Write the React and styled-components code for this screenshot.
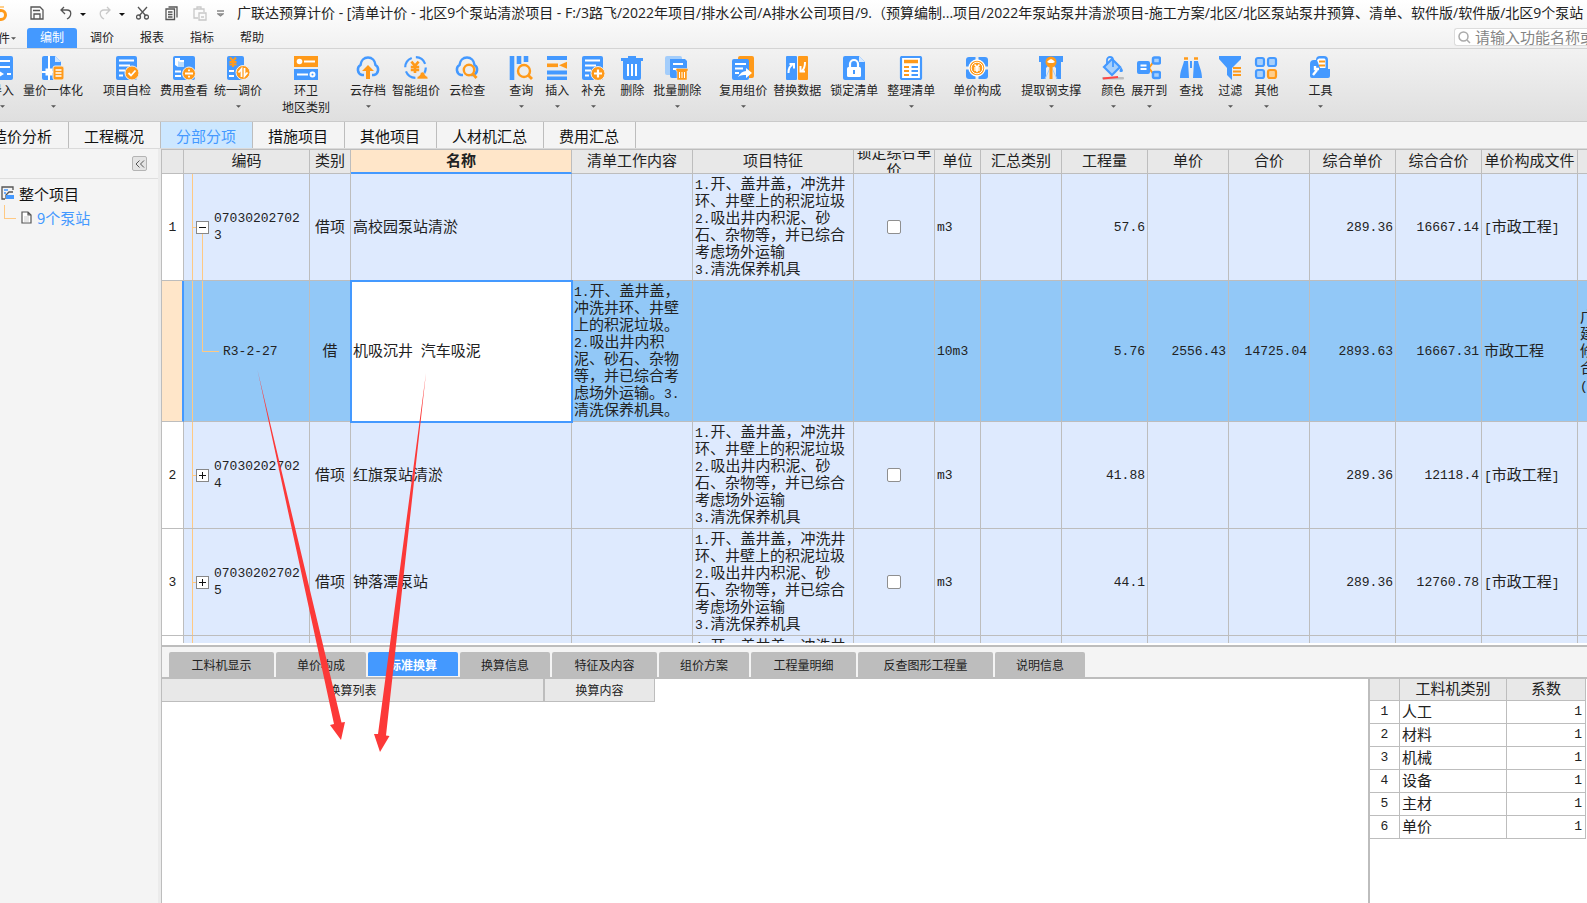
import React from 'react'
import styled, { createGlobalStyle, css } from 'styled-components'

const blue = '#4499ff'
const orange = '#ff9a1a'
const line = '#bdbdbd'
const uiFont = '"Open Sans", "Noto Sans CJK SC", sans-serif'
const gridFont = '"Noto Sans CJK SC", sans-serif'
const numFont = '"Liberation Mono", "Noto Sans CJK SC", monospace'

const GlobalStyle = createGlobalStyle`
  * { box-sizing: border-box; }
  body { margin: 0; font-family: ${uiFont}; font-size: 12px; color: #222; overflow: hidden; }
  button { font: inherit; color: inherit; border: 0; background: none; padding: 0; white-space: nowrap; }
  svg { flex: none; }
`

const Window = styled.div`
  position: relative;
  height: 100vh;
  display: flex;
  flex-direction: column;
  overflow: hidden;
  background: #f4f4f4;
`

const TopBar = styled.header`
  flex: none;
  background: linear-gradient(#ffffff, #f1f1f1);
  border-bottom: 1px solid #d4d4d4;
`

const TitleRow = styled.div`
  display: flex;
  align-items: center;
  height: 28px;
`

const QuickBar = styled.div`
  flex: none;
  width: 237px;
  display: flex;
  align-items: center;
`

const QuickButton = styled.button`
  flex: none;
  display: flex;
  width: ${props => props.$width}px;
  opacity: ${props => (props.disabled ? 0.3 : 1)};
`

const Title = styled.h1`
  margin: 0;
  padding-bottom: 2px;
  font-size: 14px;
  font-weight: 400;
  line-height: 26px;
  white-space: nowrap;
`

const MenuRow = styled.nav`
  display: flex;
  height: 20px;
`

const MenuButton = styled.button`
  width: 50px;
  line-height: 20px;
  ${props => props.$active && css`
    background: ${blue};
    color: #fff;
    border-radius: 3px 3px 0 0;
  `}
`

const FileButton = styled.button`
  width: 27px;
  display: flex;
  align-items: center;
  justify-content: flex-end;
  gap: 1px;
  padding-right: 11px;
  overflow: hidden;
`

const SearchBox = styled.label`
  margin-left: auto;
  width: 133px;
  height: 18px;
  display: flex;
  align-items: center;
  gap: 4px;
  padding-left: 3px;
  background: #fff;
  border: 1px solid #dcdcdc;
  border-right: 0;
  border-radius: 3px 0 0 3px;
`

const SearchInput = styled.input`
  flex: 1;
  min-width: 0;
  height: 16px;
  padding: 0 0 2px;
  border: 0;
  outline: 0;
  background: none;
  font-family: ${gridFont};
  font-size: 15px;
  &::placeholder { color: #858585; opacity: 1; }
`

const Ribbon = styled.div`
  flex: none;
  display: flex;
  align-items: flex-start;
  height: 73px;
  padding-top: 7px;
  margin-left: -10px;
  background: linear-gradient(#f2f2f2, #dfdfdf);
  border-bottom: 1px solid #cacaca;
`

const ToolButton = styled.button`
  flex: none;
  display: flex;
  flex-direction: column;
  align-items: center;
  margin-left: ${props => props.$space}px;
  line-height: 17px;
  font-family: ${gridFont};
`

const ToolLabel = styled.span`
  margin-top: 1px;
`

const CaretSlot = styled.span`
  display: flex;
  align-items: center;
  height: 17px;
  padding-bottom: 1px;
`

const Tabs = styled.nav`
  flex: none;
  display: flex;
  height: 27px;
  margin-left: -23px;
  border-bottom: 1px solid #dadada;
`

const Tab = styled.button`
  padding: 2px 16px 0 15px;
  border-right: 1px solid ${line};
  font-family: ${gridFont};
  font-size: 15px;
  line-height: 24px;
  color: ${props => (props.$active ? blue : '#111')};
  background: ${props => (props.$active ? '#cce7ff' : 'transparent')};
`

const Body = styled.div`
  flex: 1;
  min-height: 0;
  display: flex;
`

const Sidebar = styled.aside`
  flex: 0 0 161px;
  border-right: 3px solid #ebebeb;
`

const SideHead = styled.div`
  display: flex;
  justify-content: flex-end;
  height: 30px;
  padding: 7px 11px 0 0;
  border-bottom: 1px solid #dedede;
`

const CollapseButton = styled.button`
  width: 15px;
  height: 15px;
  display: flex;
  align-items: center;
  justify-content: center;
  border: 1px solid #b4b4b4;
  border-radius: 2px;
  background: #e4e4e4;
`

const Tree = styled.ul`
  margin: 0;
  padding: 2px 0 0;
  list-style: none;
  font-family: ${gridFont};
  font-size: 15px;
`

const TreeItem = styled.li`
  display: flex;
  align-items: center;
  gap: 5px;
  height: 24px;
  padding-left: ${props => (props.$child ? 4 : 1)}px;
  color: ${props => (props.$child ? blue : '#111')};
`

const Branch = styled.span`
  width: 12px;
  height: 14px;
  align-self: flex-start;
  border-left: 1px solid #ffc983;
  border-bottom: 1px solid #ffc983;
`

const Main = styled.main`
  flex: 1;
  min-width: 0;
  display: flex;
  flex-direction: column;
  border-left: 1px solid ${line};
`

const GridPane = styled.section`
  flex: 1;
  min-height: 0;
  overflow: hidden;
  border-top: 1px solid ${line};
`

const Grid = styled.table`
  width: 100%;
  min-width: 1512px;
  table-layout: fixed;
  border-spacing: 0;
  font-family: ${gridFont};
  font-size: 15px;
  line-height: 17px;
`

const GridHead = styled.th`
  height: 24px;
  padding: 0;
  font-weight: ${props => (props.$current ? 700 : 400)};
  background: ${props => (props.$current ? '#ffe6c9' : '#e8e8e8')};
  border-right: 1px solid ${line};
  border-bottom: ${props => (props.$current ? `2px solid ${blue}` : `1px solid ${line}`)};
`

const HeadText = styled.div`
  height: 22px;
  padding-bottom: 4px;
  display: flex;
  align-items: center;
  justify-content: center;
  overflow: hidden;
`

const GridRow = styled.tr`
  background: ${props => (props.$selected ? '#92c8f7' : '#deeafe')};
`

const Cell = styled.td`
  height: 107px;
  padding: ${props => (props.$num ? '2px' : '0 2px 4px')};
  text-align: ${props => props.$align || 'left'};
  font-family: ${props => (props.$num ? numFont : 'inherit')};
  font-size: ${props => (props.$num ? 13 : 15)}px;
  border-right: 1px solid ${line};
  border-bottom: 1px solid ${line};
  ${props => props.$editing && css`
    background: #fff;
    outline: 2px solid ${blue};
    outline-offset: -1px;
  `}
`

const RowNumber = styled(Cell)`
  padding: 0;
  text-align: center;
  font-family: ${numFont};
  font-size: 13px;
  background: ${props => (props.$selected ? '#ffe6c9' : '#fff')};
  ${props => props.$selected && css`border-right: 2px solid ${blue};`}
`

// the tree lines are painted behind the code text
const guide = 'linear-gradient(#ffc983, #ffc983)'

const CodeCell = styled(Cell)`
  padding-left: ${props => (props.$child ? 39 : 12)}px;
  font-family: ${numFont};
  font-size: 13px;
  background-repeat: no-repeat;
  background-image: ${guide}, ${guide}, ${guide};
  background-position: 8px 0, ${props => (props.$child ? '18px 0, 18px 50%' : '8px 50%, 18px 100%')};
  background-size: 1px 100%, ${props => (props.$child ? '1px 50%, 17px 1px' : `4px 1px, 1px ${props.$open ? '50%' : '0'}`)};
`

const CodeBox = styled.div`
  display: flex;
  align-items: center;
  gap: 5px;
  word-break: break-all;
`

const Expander = styled.button`
  flex: none;
  display: flex;
  background: #fff;
`

// zero line height keeps the second face from growing the line box
const Half = styled.span`
  font-family: ${numFont};
  font-size: 13px;
  line-height: 0;
  white-space: pre-wrap;
`

const Check = styled.input`
  display: block;
  margin: 0 auto;
  width: 14px;
  height: 14px;
  appearance: none;
  background: #fff;
  border: 1px solid #8f8f8f;
  border-radius: 2px;
`

const BottomPane = styled.section`
  flex: 0 0 260px;
  display: flex;
  flex-direction: column;
  border-top: 2px solid #fff;
`

const BottomTabs = styled.div`
  display: flex;
  align-items: flex-start;
  gap: 2px;
  height: 34px;
  padding: 5px 7px 0;
  border-top: 2px solid ${line};
  border-bottom: 2px solid ${line};
`

const BottomTab = styled.button`
  flex: none;
  width: ${props => props.$chars * 15 + 30}px;
  height: ${props => (props.$active ? 24 : 25)}px;
  font-family: ${gridFont};
  font-weight: ${props => (props.$active ? 700 : 400)};
  line-height: 25px;
  border-radius: 2px 2px 0 0;
  color: ${props => (props.$active ? '#fff' : '#222')};
  background: ${props => (props.$active ? blue : line)};
`

const BottomBody = styled.div`
  flex: 1;
  min-height: 0;
  display: flex;
  background: #fff;
`

const ConvertArea = styled.div`
  flex: 1;
  min-width: 0;
`

const ConvertTable = styled.table`
  width: 493px;
  table-layout: fixed;
  border-spacing: 0;
  font-family: ${gridFont};
`

const ConvertHead = styled.th`
  height: 23px;
  padding: 0 0 2px;
  font-weight: 400;
  background: #e8e8e8;
  border-right: ${props => (props.$last ? 1 : 2)}px solid ${line};
  border-bottom: 1px solid ${line};
`

const FactorArea = styled.div`
  flex: 0 0 219px;
  border-left: 2px solid ${line};
`

const FactorTable = styled.table`
  width: 216px;
  table-layout: fixed;
  border-spacing: 0;
  font-family: ${gridFont};
  font-size: 15px;
  line-height: 18px;
`

const FactorHead = styled.th`
  height: 22px;
  padding: 0 0 3px;
  font-weight: 400;
  background: #e8e8e8;
  border-right: 1px solid ${line};
  border-bottom: 1px solid ${line};
`

const FactorCell = styled.td`
  height: 23px;
  padding: ${props => (props.$num ? '0 3px' : '0 2px 2px')};
  text-align: ${props => props.$align || 'left'};
  font-family: ${props => (props.$num ? numFont : 'inherit')};
  font-size: ${props => (props.$num ? 13 : 15)}px;
  border-right: 1px solid ${line};
  border-bottom: 1px solid ${line};
`

const Arrows = styled.svg`
  position: absolute;
  left: 250px;
  top: 365px;
  pointer-events: none;
`

const Caret = ({ color = '#555', size = 5 }) => (
    <svg width={size} height="3" viewBox="0 0 6 3"><path d="M0 0h6L3 3z" fill={color} /></svg>
)

const Coin = ({ cx, cy, r = 7, children }) => (
    <g>
        <circle cx={cx} cy={cy} r={r} fill={orange} stroke="#f0f0f0" strokeWidth="1" />
        <g fill="none" stroke="#fff" strokeWidth="1.8">{children}</g>
    </g>
)

const Sheet = () => (
    <g>
        <rect x="1" width="21" height="24" rx="2" fill={blue} />
        <path d="M4 4.500h15M4 9.500h11M4 14.500h6M4 19.500h4" stroke="#fff" strokeWidth="2" />
    </g>
)

const yen = 'M-3 -4.500L0 -1L3 -4.500M0 -1V5M-3.500 0H3.500M-3.500 2.500H3.500'
const cloud = 'M8 19H6A5.500 5.500 0 0 1 4.500 9C5 4.500 8 1.500 12 1.500S19 4.500 19.500 9A5.500 5.500 0 0 1 18 19H16'

const icons = {
    import: <g>
        <rect x="1" width="22" height="24" rx="2" fill={blue} />
        <path d="M4 5h16M4 11h16M17 18h4" stroke="#fff" strokeWidth="2" /><path d="M6 13l8 5-8 5z" fill="#fff" />
    </g>,
    quantity: <g>
        <path d="M3 0h11l6 6v18H3a2 2 0 0 1-2-2V2a2 2 0 0 1 2-2z" fill={blue} />
        <path d="M14 0v6h6z" fill="#cfe5ff" />
        <path d="M8 0v24M1 16h12" stroke="#fff" strokeWidth="2" />
        <rect x="4.500" y="12.500" width="7" height="7" fill="#fff" />
        <rect x="12" y="10" width="11" height="14" rx="2" fill={orange} stroke="#eee" />
        <path d="M14.500 14h6M14.500 17h6M14.500 20h6" stroke="#fff" strokeWidth="1.700" />
    </g>,
    check: <g><Sheet /><Coin cx="17" cy="17"><path d="M13.500 17l2.500 2.500 4.500-5" /></Coin></g>,
    fee: <g>
        <rect x="1" width="22" height="24" rx="2" fill={blue} />
        <path d="M3 2h5v2h4v7H6L3 9z" fill="#fff" /><path d="M6 5l2 1h4v5H6z" fill="#b9dcff" />
        <path d="M3 15.500h6M3 20h6" stroke="#fff" strokeWidth="2" />
        <Coin cx="17" cy="17.500" r="6.500"><path d="M13 17.500h8M17 13.500v1.800M17 19.700v1.800" /></Coin>
    </g>,
    adjust: <g>
        <rect x="1" width="17" height="24" rx="2" fill={blue} />
        <path d={yen} transform="translate(7 6)" fill="none" stroke={orange} strokeWidth="2" />
        <path d="M3 15h5M3 20h5" stroke="#fff" strokeWidth="2" />
        <Coin cx="17" cy="16.500"><path d="M15.500 21v-8l-3 3.500M18.500 12v8l3-3.500" /></Coin>
    </g>,
    region: <g>
        <rect width="24" height="11" fill={orange} /><rect y="13" width="24" height="11" fill={blue} />
        <circle cx="5.500" cy="5.500" r="2.800" fill="#fff" /><path d="M10 5.500h11M3 18.500h11" stroke="#fff" strokeWidth="2" />
        <circle cx="18.500" cy="18.500" r="2" fill="none" stroke="#fff" strokeWidth="2" />
    </g>,
    archive: <g><path d={cloud} fill="none" stroke={blue} strokeWidth="2.500" /><path d="M12 9l6 6h-4v8h-4v-8H6z" fill={orange} /></g>,
    smart: <g>
        <circle cx="11.500" cy="11.500" r="10.300" fill="none" stroke={blue} strokeWidth="2.200" strokeDasharray="12 4.200" />
        <path d={yen} transform="translate(11 11) scale(1.200)" fill="none" stroke={orange} strokeWidth="2.200" />
        <path d="M13 23h11c0-3-2-3-3-4 0-4-5-4-5 0-1 1-3 1-3 4z" fill={orange} stroke="#eee" strokeWidth=".6" />
    </g>,
    cloudCheck: <g><path d={cloud} fill="none" stroke={blue} strokeWidth="2.500" /><circle cx="14" cy="14" r="5.200" fill="#ededed" stroke={orange} strokeWidth="2.400" /><path d="M17.500 17.500l4 4.500" stroke={orange} strokeWidth="2.800" /></g>,
    query: <g>
        <path d="M3 0v24M10 0v8M17 0v6" stroke={blue} strokeWidth="4.600" />
        <circle cx="15" cy="15" r="6" fill="#ededed" stroke={orange} strokeWidth="2.400" /><path d="M19 19l4 4" stroke={orange} strokeWidth="2.800" />
    </g>,
    insert: <g><path d="M2 2h20M2 16.500h20M2 22.500h20" stroke={blue} strokeWidth="4" strokeLinecap="butt" /><path d="M2 9.300h11" stroke={orange} strokeWidth="3.600" /><path d="M14 9.300l8-3.500v7z" fill={orange} /></g>,
    add: <g><Sheet /><Coin cx="17" cy="17.500"><path d="M13 17.500h8M17 13.500v8" strokeWidth="2.200" /></Coin></g>,
    remove: <g><path d="M8 0h8v2h7v3H1V2h7z" fill={blue} /><path d="M3 5h18v17a2 2 0 0 1-2 2H5a2 2 0 0 1-2-2z" fill={blue} /><path d="M8 8v12M12 8v12M16 8v12" stroke="#fff" strokeWidth="2" /></g>,
    batch: <g>
        <rect width="17" height="19" rx="2" fill="#a3cdfb" /><path d="M5 3h15l2 2v17H7a2 2 0 0 1-2-2z" fill={blue} />
        <path d="M8 8h10M8 13h4" stroke="#fff" strokeWidth="1.800" />
        <path d="M11 12.500h12v2.500h-1V24H12v-9H11z" fill={orange} stroke="#eee" strokeWidth=".5" /><path d="M14.500 16v6M17 16v6M19.500 16v6" stroke="#fff" />
    </g>,
    reuse: <g><rect x="7" width="16" height="22" rx="2" fill={orange} /><rect x="1" y="3" width="17" height="21" rx="2" fill={blue} /><path d="M4 8h11M4 12.500h8M4 17h4" stroke="#fff" strokeWidth="2" /><path d="M7 21c2-4 5-6 8-6v-3l6 5-6 5v-3c-3 0-5 0-8 2z" fill="#fff" /></g>,
    replace: <g><rect x="1" width="11" height="24" rx="1" fill={blue} /><rect x="13" width="10" height="24" rx="1" fill={orange} /><path d="M3.500 17c0-4 1-7 4-8M4.500 8H9v4.500M20 6c0 4-1 7-3 9M15.500 10v5.500H20" fill="none" stroke="#fff" strokeWidth="2" /></g>,
    lock: <g><path d="M3 0h14l6 6v18H3a2 2 0 0 1-2-2V2a2 2 0 0 1 2-2z" fill={blue} /><path d="M17 0v6h6z" fill="#d6e9ff" /><rect x="5" y="11" width="14" height="10" rx="1.500" fill="#fff" /><path d="M8 12V8a4 4 0 0 1 8 0v4" fill="none" stroke="#fff" strokeWidth="2.200" /><path d="M12 14v4" stroke={blue} strokeWidth="2" /></g>,
    arrange: <g><rect x="2" y="1" width="20" height="22" rx="1" fill="#fff" stroke={blue} strokeWidth="2.200" /><path d="M5 5.500h14" stroke={orange} strokeWidth="3.500" /><path d="M5 11h5M5 15h5M5 19h5" stroke={orange} strokeWidth="1.800" /><path d="M12.500 11H19M12.500 15H19M12.500 19H19" stroke={blue} strokeWidth="1.800" /></g>,
    price: <g>
        <rect x="1" y="1" width="22" height="22" rx="3" fill={blue} /><path d="M12 0v24M0 12h24" stroke="#eee" strokeWidth="3" />
        <circle cx="12" cy="12" r="8" fill={orange} stroke="#fff" strokeWidth="1.300" /><circle cx="12" cy="12" r="5.800" fill="none" stroke="#fff" />
        <path d={yen} transform="translate(12 12) scale(.8)" fill="none" stroke="#fff" strokeWidth="2" />
    </g>,
    steel: <g>
        <path d="M0 0h24v6h-2v17h-5V12l-5-5-5 5v11H2V6H0z" fill={blue} /><path d="M6 23l6-13 6 13" fill="none" stroke="#a8d0fb" />
        <path d="M12 10v13" stroke={orange} strokeWidth="3" /><circle cx="12" cy="6" r="5.500" fill={orange} /><path d="M8 6l2-2 2-1 2 1 2 2-2 1h-4z" fill="#fff" />
    </g>,
    color: <g>
        <path d="M11 3l8 8-8 8-8-8z" fill="#a8d0fb" stroke={blue} strokeWidth="2.200" /><path d="M6 9V4a3 3 0 0 1 6 0v7" fill="none" stroke={blue} strokeWidth="1.800" />
        <path d="M20 11c3 4 2 5 0 5s-2-1 0-5z" fill={blue} /><rect x="1" y="21" width="22" height="2.500" rx="1" fill="#bdbdbd" /><path d="M2 22.500l15-1.500" stroke="#ff4646" strokeWidth="1.800" />
    </g>,
    expand: <g>
        <path d="M12 12l5-7M12 12l5 7" stroke={orange} strokeWidth="2" /><rect y="5" width="13" height="13" rx="2" fill={blue} /><path d="M3.500 9.500h6M3.500 13h6" stroke="#fff" strokeWidth="1.800" />
        <rect x="16" y="1.500" width="7" height="6" rx="1.500" fill="#a8d0fb" stroke={blue} strokeWidth="2.500" /><rect x="16" y="16" width="7" height="6" rx="1.500" fill="#a8d0fb" stroke={blue} strokeWidth="2.500" />
    </g>,
    find: <g><path d="M5 5h4l1 17H1C1 15 4 10 5 5zM15 5h4c1 5 4 10 4 17h-9z" fill={blue} /><path d="M11 5h2v7h-2z" fill={blue} /><path d="M5 2.500h4M15 2.500h4" stroke={orange} strokeWidth="2.500" /></g>,
    filter: <g><path d="M1 0h22v3l-9 9v12l-5-5v-7L1 3z" fill={blue} /><path d="M15 12h8M15 15.500h8M15 19h8" stroke={orange} strokeWidth="1.800" /></g>,
    other: <g fill="#a8d0fb" stroke={blue} strokeWidth="2.200">
        <rect x="2" y="2" width="8" height="8" rx="2" /><rect x="14" y="2" width="8" height="8" rx="2" /><rect x="2" y="14" width="8" height="8" rx="2" />
        <rect x="14" y="14" width="8" height="8" rx="2" fill="#ffce8c" stroke={orange} />
    </g>,
    tools: <g>
        <path d="M2 8a4 4 0 0 1 4-4h2a4 4 0 0 1 4-4h4a4 4 0 0 1 4 4v9h2v7a2 2 0 0 1-2 2H4a2 2 0 0 1-2-2z" fill={blue} /><path d="M9 4l2-1.500h5.500l1 1V12H12z" fill="#fff" /><path d="M11 5.500h6M11 9.500h6" stroke={orange} strokeWidth="1.800" />
        <path d="M5 19l4-5M7 10v3h4" fill="none" stroke="#fff" strokeWidth="2.400" />
    </g>,
}

const tools = [
    { icon: 'import', label: '导入', space: 0, menu: true },
    { icon: 'quantity', label: '量价一体化', space: 9, menu: true },
    { icon: 'check', label: '项目自检', space: 20 },
    { icon: 'fee', label: '费用查看', space: 9 },
    { icon: 'adjust', label: '统一调价', space: 6, menu: true },
    { icon: 'region', label: '环卫', second: '地区类别', space: 20 },
    { icon: 'archive', label: '云存档', space: 20, menu: true },
    { icon: 'smart', label: '智能组价', space: 6 },
    { icon: 'cloudCheck', label: '云检查', space: 9 },
    { icon: 'query', label: '查询', space: 24, menu: true },
    { icon: 'insert', label: '插入', space: 12, menu: true },
    { icon: 'add', label: '补充', space: 12, menu: true },
    { icon: 'remove', label: '删除', space: 15 },
    { icon: 'batch', label: '批量删除', space: 9, menu: true },
    { icon: 'reuse', label: '复用组价', space: 18, menu: true },
    { icon: 'replace', label: '替换数据', space: 6 },
    { icon: 'lock', label: '锁定清单', space: 9 },
    { icon: 'arrange', label: '整理清单', space: 9, menu: true },
    { icon: 'price', label: '单价构成', space: 18 },
    { icon: 'steel', label: '提取钢支撑', space: 20, menu: true },
    { icon: 'color', label: '颜色', space: 20, menu: true },
    { icon: 'expand', label: '展开到', space: 6, menu: true },
    { icon: 'find', label: '查找', space: 12 },
    { icon: 'filter', label: '过滤', space: 15, menu: true },
    { icon: 'other', label: '其他', space: 12, menu: true },
    { icon: 'tools', label: '工具', space: 30, menu: true },
]

const tabs = ['造价分析', '工程概况', '分部分项', '措施项目', '其他项目', '人材机汇总', '费用汇总']

const columns = [
    ['', 22], ['编码', 126], ['类别', 41], ['名称', 221], ['清单工作内容', 121], ['项目特征', 161],
    ['锁定综合单价', 81], ['单位', 46], ['汇总类别', 81], ['工程量', 86], ['单价', 81], ['合价', 81],
    ['综合单价', 86], ['综合合价', 86], ['单价构成文件', 96], ['', null],
]

const feature = '1.开、盖井盖，冲洗井环、井壁上的积泥垃圾\n2.吸出井内积泥、砂石、杂物等，并已综合考虑场外运输\n3.清洗保养机具'

const rows = [
    { no: 1, code: '070302027023', open: true, kind: '借项', name: '高校园泵站清淤', feature, unit: 'm3', qty: '57.6', unitAll: '289.36', totalAll: '16667.14', file: '[市政工程]' },
    {
        child: true, code: 'R3-2-27', kind: '借', name: '机吸沉井 汽车吸泥',
        work: '1.开、盖井盖，冲洗井环、井壁上的积泥垃圾。2.吸出井内积泥、砂石、杂物等，并已综合考虑场外运输。3.清洗保养机具。',
        unit: '10m3', qty: '5.76', price: '2556.43', total: '14725.04', unitAll: '2893.63', totalAll: '16667.31', file: '市政工程', extra: '广\n建\n修\n合\n(',
    },
    { no: 2, code: '070302027024', kind: '借项', name: '红旗泵站清淤', feature, unit: 'm3', qty: '41.88', unitAll: '289.36', totalAll: '12118.4', file: '[市政工程]' },
    { no: 3, code: '070302027025', kind: '借项', name: '钟落潭泵站', feature, unit: 'm3', qty: '44.1', unitAll: '289.36', totalAll: '12760.78', file: '[市政工程]' },
    { code: '', kind: '', name: '', feature },
]

const bottomTabs = ['工料机显示', '单价构成', '标准换算', '换算信息', '特征及内容', '组价方案', '工程量明细', '反查图形工程量', '说明信息']
const factors = ['人工', '材料', '机械', '设备', '主材', '单价']

// half-width characters are set in the monospace face
function Mixed({ text = '' }) {
    return text.split('\n').map((part, i) => (
        <React.Fragment key={i}>
            {i > 0 && <br />}
            {part.split(/([\x20-\x7e]+)/).map((s, j) => (j % 2 ? <Half key={j}>{s}</Half> : s))}
        </React.Fragment>
    ))
}

function QuickIcons() {
    const pen = { fill: 'none', stroke: '#555', strokeWidth: 1.3 }
    return (
        <QuickBar>
            <QuickButton $width={30} aria-label="首页">
                <svg width="8" height="16"><circle cx="1" cy="9" r="4.500" fill="none" stroke={orange} strokeWidth="3" /><path d="M0 1h4" stroke="#ffcf8a" strokeWidth="2" /></svg>
            </QuickButton>
            <QuickButton $width={30} aria-label="保存">
                <svg width="14" height="16" {...pen}><path d="M1 1h9l3 3v9H1zM3 4.500h7M4 13V8h6v5" /></svg>
            </QuickButton>
            <QuickButton $width={20} aria-label="撤销">
                <svg width="12" height="16" {...pen}><path d="M4 1L1 4l4 4M1 4h6c5 0 5 6 0 9" /></svg>
            </QuickButton>
            <QuickButton $width={19} aria-label="撤销列表"><Caret color="#111" size={6} /></QuickButton>
            <QuickButton $width={20} disabled aria-label="恢复">
                <svg width="12" height="16" {...pen}><path d="M8 1l3 3-4 4M11 4H5C0 4 0 10 5 13" /></svg>
            </QuickButton>
            <QuickButton $width={17} aria-label="恢复列表"><Caret color="#111" size={6} /></QuickButton>
            <QuickButton $width={29} aria-label="剪切">
                <svg width="13" height="16" {...pen}><path d="M2 1l8 9M11 1l-8 9" /><circle cx="2.500" cy="11" r="2" /><circle cx="10.500" cy="11" r="2" /></svg>
            </QuickButton>
            <QuickButton $width={28} aria-label="复制">
                <svg width="13" height="16" {...pen}><path d="M3.500 1H12v10.500M1 3h8.500v10.500H1zM3 6h4.500M3 8.500h4.500M3 11h4.500" /></svg>
            </QuickButton>
            <QuickButton $width={24} disabled aria-label="粘贴">
                <svg width="14" height="16" {...pen}><path d="M5 12H1V3h10v3M4 3V1h4v2M6 7h7v7H6zM8 11h3" /></svg>
            </QuickButton>
            <QuickButton $width={8} aria-label="更多">
                <svg width="7" height="8" {...pen}><path d="M0 1h7M1 4l2.500 2L6 4z" stroke="#888" /></svg>
            </QuickButton>
        </QuickBar>
    )
}

function ItemRow({ row }) {
    return (
        <GridRow $selected={row.child}>
            <RowNumber $selected={row.child}>{row.no}</RowNumber>
            <CodeCell $num $child={row.child} $open={row.open}>
                {row.child ? row.code : (
                    <CodeBox>
                        {row.code && (
                            <Expander aria-label={row.open ? '折叠' : '展开'}>
                                <svg width="13" height="13" fill="none" stroke="#888">
                                    <rect x=".5" y=".5" width="12" height="12" />
                                    <path d={row.open ? 'M3 6.500h7' : 'M3 6.500h7M6.500 3v7'} stroke="#111" />
                                </svg>
                            </Expander>
                        )}
                        {row.code}
                    </CodeBox>
                )}
            </CodeCell>
            <Cell $align="center">{row.kind}</Cell>
            <Cell $editing={row.child}><Mixed text={row.name} /></Cell>
            <Cell><Mixed text={row.work} /></Cell>
            <Cell><Mixed text={row.feature} /></Cell>
            <Cell $num>{row.no && <Check type="checkbox" aria-label={'锁定综合单价 ' + row.no} />}</Cell>
            <Cell $num>{row.unit}</Cell>
            <Cell />
            <Cell $num $align="right">{row.qty}</Cell>
            <Cell $num $align="right">{row.price}</Cell>
            <Cell $num $align="right">{row.total}</Cell>
            <Cell $num $align="right">{row.unitAll}</Cell>
            <Cell $num $align="right">{row.totalAll}</Cell>
            <Cell><Mixed text={row.file} /></Cell>
            <Cell><Mixed text={row.extra} /></Cell>
        </GridRow>
    )
}

function App() {
    return (
        <Window>
            <GlobalStyle />
            <TopBar>
                <TitleRow>
                    <QuickIcons />
                    <Title>广联达预算计价 - [清单计价 - 北区9个泵站清淤项目 - F:/3路飞/2022年项目/排水公司/A排水公司项目/9.（预算编制...项目/2022年泵站泵井清淤项目-施工方案/北区/北区泵站泵井预算、清单、软件版/软件版/北区9个泵站</Title>
                </TitleRow>
                <MenuRow>
                    <FileButton>文件<Caret /></FileButton>
                    <MenuButton $active>编制</MenuButton>
                    <MenuButton>调价</MenuButton>
                    <MenuButton>报表</MenuButton>
                    <MenuButton>指标</MenuButton>
                    <MenuButton>帮助</MenuButton>
                    <SearchBox>
                        <svg width="13" height="13" fill="none" stroke="#aaa" strokeWidth="1.500"><circle cx="5.500" cy="5.500" r="4.500" /><path d="M9 9l3 3" /></svg>
                        <SearchInput aria-label="搜索" placeholder="请输入功能名称或" />
                    </SearchBox>
                </MenuRow>
            </TopBar>
            <Ribbon>
                {tools.map(tool => (
                    <ToolButton key={tool.icon} $space={tool.space}>
                        <svg width="24" height="24" viewBox="0 0 24 24">{icons[tool.icon]}</svg>
                        <ToolLabel>{tool.label}</ToolLabel>
                        {tool.second && <span>{tool.second}</span>}
                        {tool.menu && <CaretSlot><Caret /></CaretSlot>}
                    </ToolButton>
                ))}
            </Ribbon>
            <Tabs>
                {tabs.map(tab => <Tab key={tab} $active={tab === '分部分项'}>{tab}</Tab>)}
            </Tabs>
            <Body>
                <Sidebar>
                    <SideHead>
                        <CollapseButton aria-label="收起">
                            <svg width="10" height="8" fill="none" stroke="#555"><path d="M4.500 0.500L1 4l3.500 3.500M9 0.500L5.500 4 9 7.500" /></svg>
                        </CollapseButton>
                    </SideHead>
                    <Tree>
                        <TreeItem>
                            <svg width="13" height="14" fill="none" stroke="#555" strokeWidth="1.300">
                                <path d="M12 4V1H1v12h3" /><path d="M3 4h4M3 7h2" stroke={blue} /><path d="M5 13V9l3-3h4" /><path d="M5 13V9h8v4z" fill={blue} stroke="none" />
                            </svg>
                            整个项目
                        </TreeItem>
                        <TreeItem $child>
                            <Branch />
                            <svg width="11" height="13" fill="#fff" stroke="#555" strokeWidth="1.200">
                                <path d="M1 1h6l3 3v8H1zM7 1v3h3" /><path d="M3 6h5M3 8h5M3 10h5" stroke="#ccc" />
                            </svg>
                            9个泵站
                        </TreeItem>
                    </Tree>
                </Sidebar>
                <Main>
                    <GridPane>
                        <Grid>
                            <colgroup>
                                {columns.map(([, width], i) => <col key={i} width={width || undefined} />)}
                            </colgroup>
                            <thead>
                                <tr>
                                    {columns.map(([label], i) => (
                                        <GridHead key={i} $current={label === '名称'}><HeadText>{label}</HeadText></GridHead>
                                    ))}
                                </tr>
                            </thead>
                            <tbody>
                                {rows.map((row, i) => <ItemRow key={i} row={row} />)}
                            </tbody>
                        </Grid>
                    </GridPane>
                    <BottomPane>
                        <BottomTabs>
                            {bottomTabs.map(tab => (
                                <BottomTab key={tab} $active={tab === '标准换算'} $chars={tab.length}>{tab}</BottomTab>
                            ))}
                        </BottomTabs>
                        <BottomBody>
                            <ConvertArea>
                                <ConvertTable>
                                    <colgroup><col width="383" /><col /></colgroup>
                                    <thead>
                                        <tr><ConvertHead>换算列表</ConvertHead><ConvertHead $last>换算内容</ConvertHead></tr>
                                    </thead>
                                </ConvertTable>
                            </ConvertArea>
                            <FactorArea>
                                <FactorTable>
                                    <colgroup><col width="30" /><col width="107" /><col /></colgroup>
                                    <thead>
                                        <tr><FactorHead /><FactorHead>工料机类别</FactorHead><FactorHead>系数</FactorHead></tr>
                                    </thead>
                                    <tbody>
                                        {factors.map((name, i) => (
                                            <tr key={name}>
                                                <FactorCell $num $align="center">{i + 1}</FactorCell>
                                                <FactorCell>{name}</FactorCell>
                                                <FactorCell $num $align="right">1</FactorCell>
                                            </tr>
                                        ))}
                                    </tbody>
                                </FactorTable>
                            </FactorArea>
                        </BottomBody>
                    </BottomPane>
                </Main>
            </Body>
            <Arrows width="190" height="390" viewBox="250 365 190 390" fill="#fc3938">
                <path d="M257.500 370L341.500 722.500L345 722L341 740L330 725L334 724z" />
                <path d="M426 373L386 735.500L389.500 736L380 752L374 734L378 734z" />
            </Arrows>
        </Window>
    )
}

export default App
